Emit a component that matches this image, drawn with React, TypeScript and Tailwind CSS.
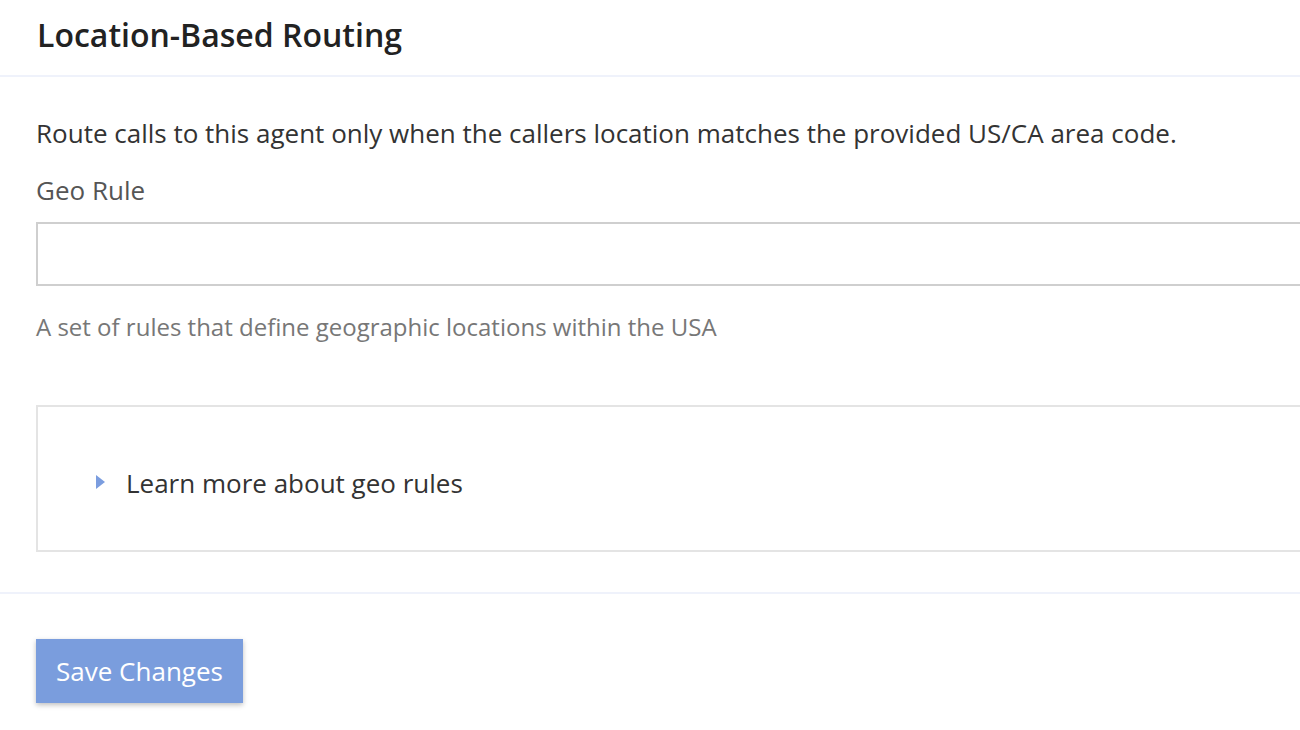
export default function App() {
  return (
    <div className="h-[730px] w-[1300px] overflow-hidden bg-white font-['Open_Sans',sans-serif]">
      <div className="h-[77px] border-b-2 border-[#eff2fb] pl-[37px] pt-[15px]">
        <h1 className="text-[32px] font-semibold leading-[40px] text-[#222]">Location-Based Routing</h1>
      </div>

      <div className="pl-[36px]">
        <p className="mt-[39px] text-[26px] leading-[34px] text-[#333]">
          Route calls to this agent only when the callers location matches the provided US/CA area code.
        </p>
        <label className="mt-[23px] block text-[26px] leading-[34px] text-[#555]">Geo Rule</label>
        <input
          type="text"
          className="mt-[15px] block h-[64px] w-[1300px] border-2 border-[#cfcfcf] bg-white outline-none"
        />
        <p className="mt-[25px] text-[24px] leading-[32px] text-[#777]">
          A set of rules that define geographic locations within the USA
        </p>

        <div className="mt-[62px] flex h-[147px] w-[1300px] items-center border-2 border-[#e4e4e4] pl-[58px] pt-[8px]">
          <svg width="9" height="14" viewBox="0 0 9 14" className="mr-[21px] -mt-[2px]">
            <path d="M0 0 L9 7 L0 14 Z" fill="#7b9ddf" />
          </svg>
          <span className="text-[26px] leading-[34px] text-[#333]">Learn more about geo rules</span>
        </div>
      </div>

      <div className="mt-[40px] border-t-2 border-[#eff2fb]" />

      <div className="pl-[36px] pt-[45px]">
        <button className="h-[64px] w-[207px] bg-[#7a9ddd] text-[26px] text-white shadow-[0_2px_5px_rgba(0,0,0,0.25)]">
          Save Changes
        </button>
      </div>
    </div>
  );
}
